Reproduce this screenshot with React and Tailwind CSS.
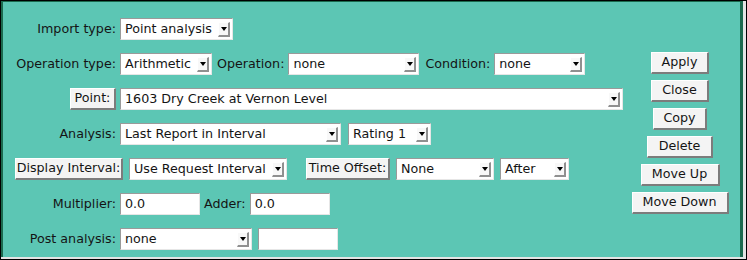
import React from "react";

const font = { fontFamily: '"DejaVu Sans", Verdana, sans-serif' };

function Arrow() {
  return (
    <div className="ml-auto mr-[2px] flex h-[15px] w-[12px] shrink-0 items-center justify-center border-t border-l border-b-[2px] border-r-[2px] border-t-white border-l-white border-b-[#909090] border-r-[#909090] bg-[#f8f8f8]">
      <svg width="6" height="4" viewBox="0 0 6 4">
        <polygon points="0,0 6,0 3,4" fill="#000" />
      </svg>
    </div>
  );
}

function Select({ w, text, className = "" }) {
  return (
    <div
      className={`flex h-[22px] shrink-0 items-center border border-t-[#9a9a9a] border-l-[#9a9a9a] border-b-[#e6e6e6] border-r-[#e6e6e6] bg-white ${w} ${className}`}
    >
      <span className="pl-[4px] whitespace-nowrap">{text}</span>
      <Arrow />
    </div>
  );
}

function Input({ w, text = "", className = "" }) {
  return (
    <div
      className={`flex h-[22px] shrink-0 items-center border border-t-[#9a9a9a] border-l-[#9a9a9a] border-b-[#e6e6e6] border-r-[#e6e6e6] bg-white ${w} ${className}`}
    >
      <span className="pl-[4px] whitespace-nowrap">{text}</span>
    </div>
  );
}

function Button({ w, text, className = "" }) {
  return (
    <div
      className={`flex h-[22px] shrink-0 items-center justify-center border-t border-l border-b-[2px] border-r-[2px] border-t-white border-l-white border-b-[#7c7c7c] border-r-[#7c7c7c] bg-[#f4f4f4] whitespace-nowrap ${w} ${className}`}
    >
      {text}
    </div>
  );
}

function Label({ children }) {
  return (
    <div className="flex w-[113px] shrink-0 justify-end whitespace-nowrap">{children}</div>
  );
}

export default function App() {
  return (
    <div className="h-[260px] w-[747px] bg-black p-[1px]" style={font}>
      <div className="h-full w-full bg-[#e4e4e4] pb-[2px] pr-[3px]">
        <div className="flex h-full border-l-2 border-t border-r-[3px] border-[#1b6a4e] bg-[#5cc6b4] text-[12.7px] leading-none text-[#141414]">
          <div className="flex w-[629px] flex-col gap-[13px] pt-[16px]">
            <div className="flex h-[22px] items-center">
              <Label>Import type:</Label>
              <Select w="w-[113px]" text="Point analysis" className="ml-[4px]" />
            </div>
            <div className="flex h-[22px] items-center">
              <Label>Operation type:</Label>
              <Select w="w-[92px]" text="Arithmetic" className="ml-[4px]" />
              <span className="ml-[5px]">Operation:</span>
              <Select w="w-[131px]" text="none" className="ml-[4px]" />
              <span className="ml-[6px]">Condition:</span>
              <Select w="w-[91px]" text="none" className="ml-[4px]" />
            </div>
            <div className="flex h-[22px] items-center">
              <div className="flex w-[113px] shrink-0 justify-end">
                <Button w="w-[46px]" text="Point:" />
              </div>
              <Select w="w-[503px]" text="1603 Dry Creek at Vernon Level" className="ml-[4px]" />
            </div>
            <div className="flex h-[22px] items-center">
              <Label>Analysis:</Label>
              <Select w="w-[221px]" text="Last Report in Interval" className="ml-[4px]" />
              <Select w="w-[83px]" text="Rating 1" className="ml-[7px]" />
            </div>
            <div className="flex h-[22px] items-center">
              <Button w="w-[108px]" text="Display Interval:" className="ml-[12px]" />
              <Select w="w-[158px]" text="Use Request Interval" className="ml-[6px]" />
              <Button w="w-[84px]" text="Time Offset:" className="ml-[19px]" />
              <Select w="w-[98px]" text="None" className="ml-[6px]" />
              <Select w="w-[69px]" text="After" className="ml-[6px]" />
            </div>
            <div className="flex h-[22px] items-center">
              <Label>Multiplier:</Label>
              <Input w="w-[80px]" text="0.0" className="ml-[4px]" />
              <span className="ml-[4px]">Adder:</span>
              <Input w="w-[80px]" text="0.0" className="ml-[4px]" />
            </div>
            <div className="flex h-[22px] items-center">
              <Label>Post analysis:</Label>
              <Select w="w-[132px]" text="none" className="ml-[4px]" />
              <Input w="w-[80px]" className="ml-[6px]" />
            </div>
          </div>
          <div className="flex w-[96px] flex-col items-center gap-[6px] pt-[50px]">
            <Button w="w-[58px]" text="Apply" />
            <Button w="w-[58px]" text="Close" />
            <Button w="w-[54px]" text="Copy" />
            <Button w="w-[66px]" text="Delete" />
            <Button w="w-[79px]" text="Move Up" />
            <Button w="w-[97px]" text="Move Down" />
          </div>
        </div>
      </div>
    </div>
  );
}
